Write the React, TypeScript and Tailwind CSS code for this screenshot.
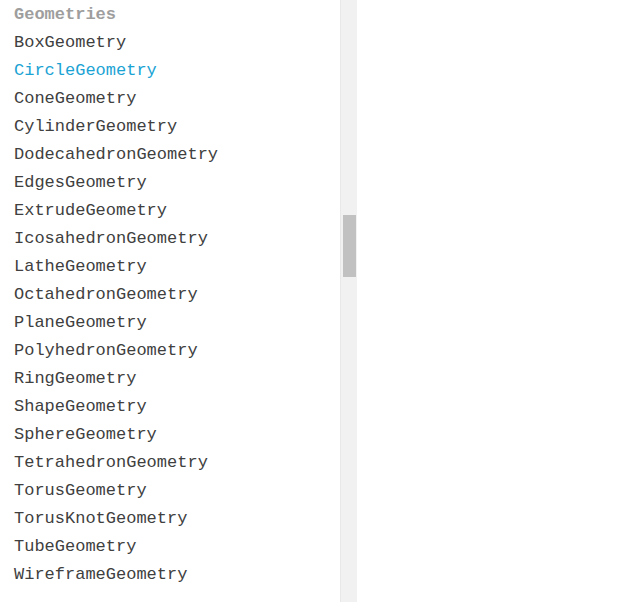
const GEOMETRIES = [
  'BoxGeometry',
  'CircleGeometry',
  'ConeGeometry',
  'CylinderGeometry',
  'DodecahedronGeometry',
  'EdgesGeometry',
  'ExtrudeGeometry',
  'IcosahedronGeometry',
  'LatheGeometry',
  'OctahedronGeometry',
  'PlaneGeometry',
  'PolyhedronGeometry',
  'RingGeometry',
  'ShapeGeometry',
  'SphereGeometry',
  'TetrahedronGeometry',
  'TorusGeometry',
  'TorusKnotGeometry',
  'TubeGeometry',
  'WireframeGeometry',
]

const SELECTED = 'CircleGeometry'

export default function App() {
  return (
    <div className="flex h-[602px] w-[628px] overflow-hidden bg-white font-['Liberation_Mono',monospace] text-[17px]">
      <div className="mt-px flex w-[340px] flex-col pl-[14px]">
        <h3 className="font-bold leading-[28px] text-[#9e9e9e]">Geometries</h3>
        <ul>
          {GEOMETRIES.map((name) => (
            <li
              key={name}
              className={
                name === SELECTED
                  ? 'leading-[28px] text-[#1ba3d4]'
                  : 'leading-[28px] text-[#404040]'
              }
            >
              {name}
            </li>
          ))}
        </ul>
      </div>
      <div className="flex w-[17px] flex-col items-center border-l border-[#e8e8e8] bg-[#f1f1f1] pt-[215px]">
        <div className="h-[62px] w-[13px] bg-[#c1c1c1]" />
      </div>
      <div className="flex-1" />
    </div>
  )
}
